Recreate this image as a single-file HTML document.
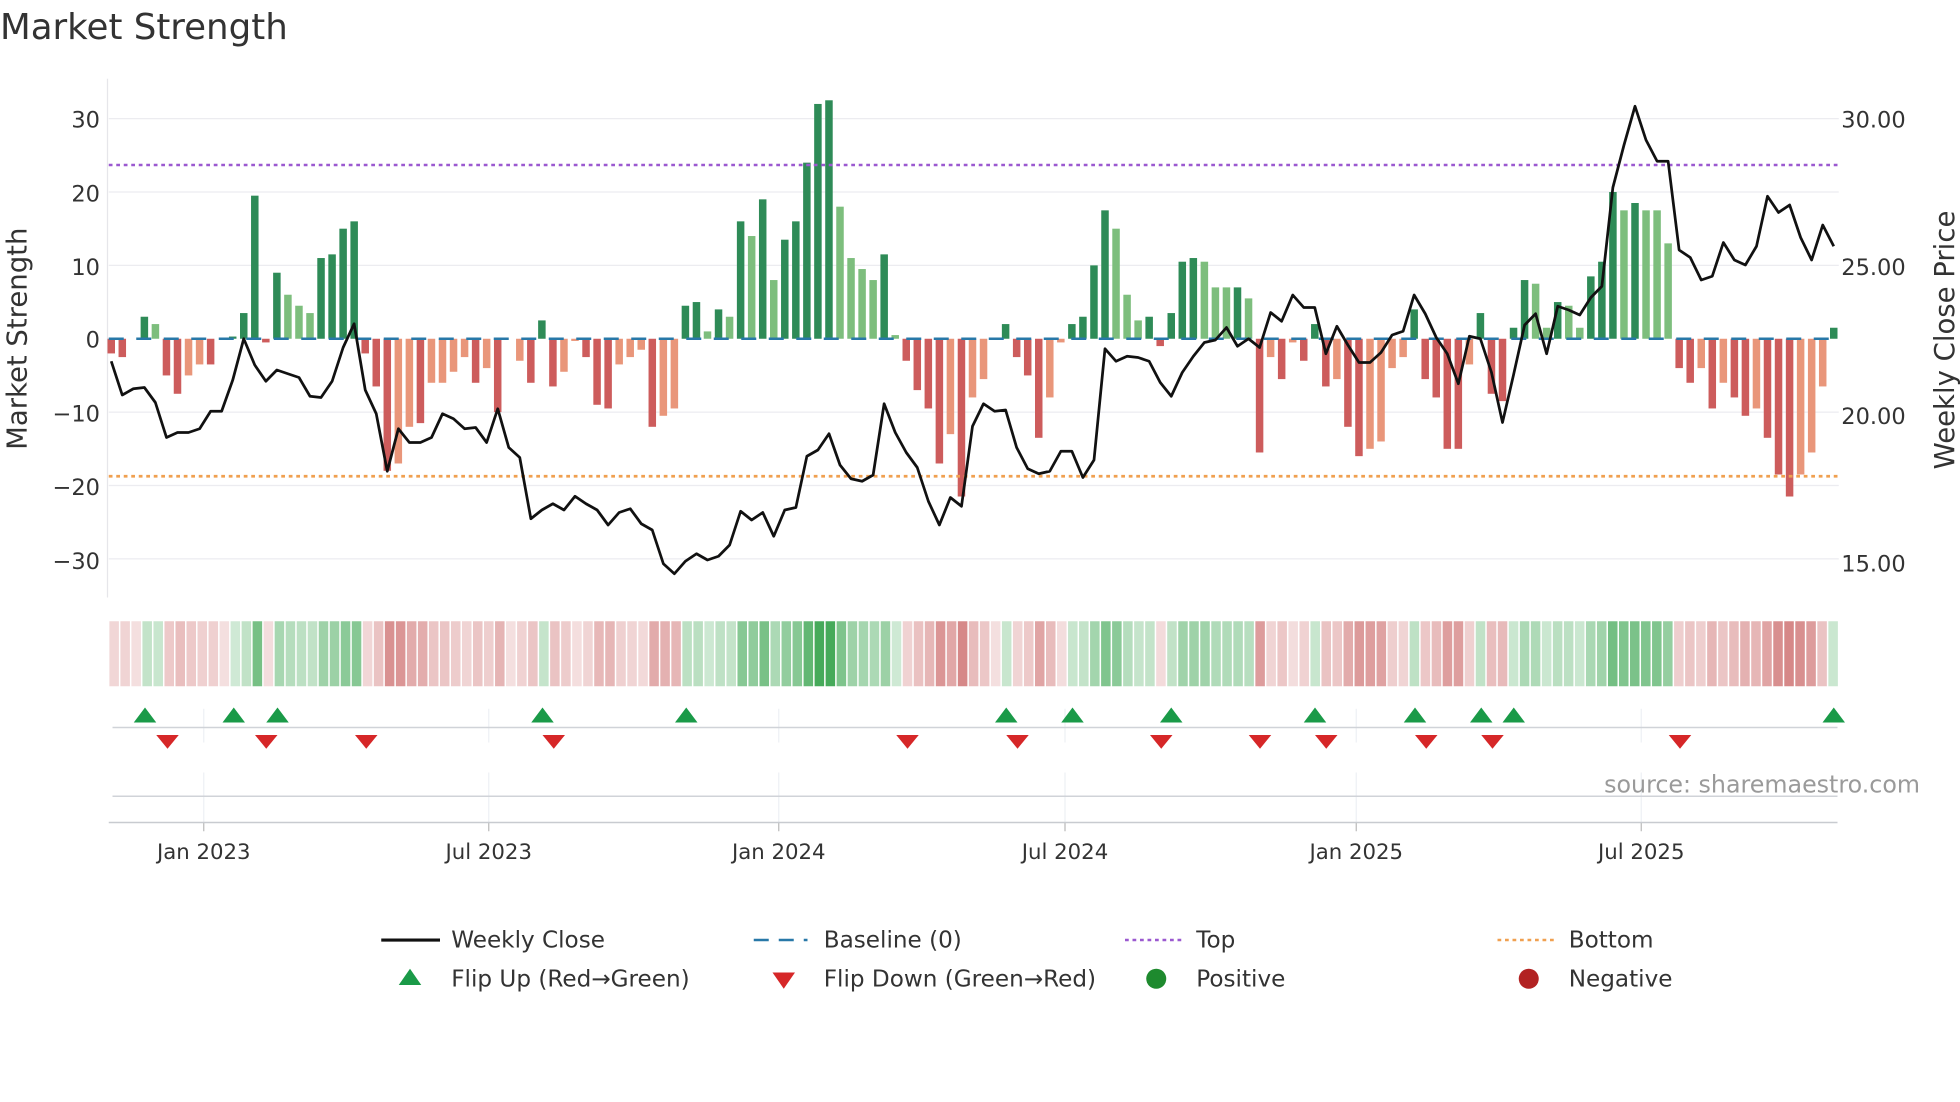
<!DOCTYPE html>
<html><head><meta charset="utf-8"><style>
html,body{margin:0;padding:0;background:#fff;width:1960px;height:1102px;overflow:hidden}
svg{display:block}
text{font-family:"DejaVu Sans","Liberation Sans",sans-serif;fill:#333}
</style></head><body>
<svg id="s" width="1960" height="1102" viewBox="0 0 1568 881.6" xmlns="http://www.w3.org/2000/svg">
<text x="0" y="31" font-size="28.5">Market Strength</text>
<g id="grid"></g>
<g id="heat"></g>
<g id="bars"></g>
<g id="lines"></g>
<g id="marks"></g>
<text x="1536" y="634" font-size="19" text-anchor="end" style="fill:#9a9a9a">source: sharemaestro.com</text>
<g font-size="18">
<text x="80" y="102" text-anchor="end">30</text>
<text x="80" y="161" text-anchor="end">20</text>
<text x="80" y="220" text-anchor="end">10</text>
<text x="80" y="278" text-anchor="end">0</text>
<text x="80" y="337" text-anchor="end">−10</text>
<text x="80" y="396" text-anchor="end">−20</text>
<text x="80" y="455" text-anchor="end">−30</text>
<text x="1473" y="102">30.00</text>
<text x="1473" y="220">25.00</text>
<text x="1473" y="339">20.00</text>
<text x="1473" y="457">15.00</text>
<text transform="translate(21,271) rotate(-90)" text-anchor="middle" font-size="22">Market Strength</text>
<text transform="translate(1563,272) rotate(-90)" text-anchor="middle" font-size="22">Weekly Close Price</text>
<text x="163" y="687" text-anchor="middle" font-size="17">Jan 2023</text>
<text x="391" y="687" text-anchor="middle" font-size="17">Jul 2023</text>
<text x="623" y="687" text-anchor="middle" font-size="17">Jan 2024</text>
<text x="852" y="687" text-anchor="middle" font-size="17">Jul 2024</text>
<text x="1085" y="687" text-anchor="middle" font-size="17">Jan 2025</text>
<text x="1313" y="687" text-anchor="middle" font-size="17">Jul 2025</text>
</g>
<g font-size="18.5">
<line x1="305" y1="752" x2="352" y2="752" stroke="#111" stroke-width="2.5"/>
<text x="361" y="758">Weekly Close</text>
<line x1="603" y1="752" x2="646" y2="752" stroke="#2878a8" stroke-width="2" stroke-dasharray="12,8"/>
<text x="659" y="758">Baseline (0)</text>
<line x1="900" y1="752" x2="945" y2="752" stroke="#9b59d0" stroke-width="2" stroke-dasharray="3,3"/>
<text x="957" y="758">Top</text>
<line x1="1198" y1="752" x2="1243" y2="752" stroke="#f0a050" stroke-width="2" stroke-dasharray="3,3"/>
<text x="1255" y="758">Bottom</text>
<polygon points="319,788 337,788 328,775" fill="#1a9a48"/>
<text x="361" y="789">Flip Up (Red→Green)</text>
<polygon points="618,778 636,778 627,791" fill="#d62728"/>
<text x="659" y="789">Flip Down (Green→Red)</text>
<circle cx="925" cy="783" r="8" fill="#1e8a2e"/>
<text x="957" y="789">Positive</text>
<circle cx="1223" cy="783" r="8" fill="#b22222"/>
<text x="1255" y="789">Negative</text>
</g>
</svg>
<script>
var NS="http://www.w3.org/2000/svg";
function el(p,t,a){var e=document.createElementNS(NS,t);for(var k in a)e.setAttribute(k,a[k]);document.getElementById(p).appendChild(e);return e;}
var B=[[-2,0],[-2.5,0],[0,0],[3,0],[2,1],[-5,0],[-7.5,0],[-5,1],[-3.5,1],[-3.5,0],[0,0],[0.3,0],[3.5,0],[19.5,0],[-0.5,0],[9,0],[6,1],[4.5,1],[3.5,1],[11,0],[11.5,0],[15,0],[16,0],[-2,0],[-6.5,0],[-18,0],[-17,1],[-12,1],[-11.5,0],[-6,1],[-6,1],[-4.5,1],[-2.5,1],[-6,0],[-4,1],[-10,0],[0,0],[-3,1],[-6,0],[2.5,0],[-6.5,0],[-4.5,1],[-0.3,1],[-2.5,0],[-9,0],[-9.5,0],[-3.5,1],[-2.5,1],[-1.5,1],[-12,0],[-10.5,1],[-9.5,1],[4.5,0],[5,0],[1,1],[4,0],[3,1],[16,0],[14,1],[19,0],[8,1],[13.5,0],[16,0],[24,0],[32,0],[32.5,0],[18,1],[11,1],[9.5,1],[8,1],[11.5,0],[0.5,1],[-3,0],[-7,0],[-9.5,0],[-17,0],[-13,1],[-21.5,0],[-8,1],[-5.5,1],[0,0],[2,0],[-2.5,0],[-5,0],[-13.5,0],[-8,1],[-0.5,1],[2,0],[3,0],[10,0],[17.5,0],[15,1],[6,1],[2.5,1],[3,0],[-1,0],[3.5,0],[10.5,0],[11,0],[10.5,1],[7,1],[7,1],[7,0],[5.5,1],[-15.5,0],[-2.5,1],[-5.5,0],[-0.5,1],[-3,0],[2,0],[-6.5,0],[-5.5,1],[-12,0],[-16,0],[-15,1],[-14,1],[-4,1],[-2.5,1],[4,0],[-5.5,0],[-8,0],[-15,0],[-15,0],[-3.5,1],[3.5,0],[-7.5,0],[-8.5,0],[1.5,0],[8,0],[7.5,1],[1.5,1],[5,0],[4.5,1],[1.5,1],[8.5,0],[10.5,0],[20,0],[17.5,1],[18.5,0],[17.5,1],[17.5,1],[13,1],[-4,0],[-6,0],[-4,1],[-9.5,0],[-6,1],[-8,0],[-10.5,0],[-9.5,1],[-13.5,0],[-18.5,0],[-21.5,0],[-18.5,1],[-15.5,1],[-6.5,1],[1.5,0]];
var L=[289,316,311,310,322,350,346,346,343,329,329,304,271,292,305,296,299,302,317,318,305,278,259,312,331,377,343,354,354,350,331,335,343,342,354,327,358,366,415,408,403,408,397,403,408,420,410,407,419,424,451,459,449,443,448,445,436,409,416,410,429,408,406,365,360,347,372,383,385,380,323,346,362,374,401,420,398,405,341,323,329,328,358,375,379,377,361,361,382,368,279,289,285,286,289,306,317,298,285,274,272,262,277,271,278,250,257,236,246,246,283,261,276,290,290,282,268,265,236,251,270,283,307,269,271,298,338,300,260,251,283,245,248,252,238,229,150,116,85,112,129,129,200,206,224,221,194,208,212,197,157,170,164,190,208,180,197];
var n=B.length,x0=89,x1=1467,dx=(x1-x0)/(n-1),Z=271,U=5.87;
[30,20,10,-10,-20,-30].forEach(function(v){var y=Z-v*U;el("grid","line",{x1:87,x2:1471,y1:y,y2:y,stroke:"#ececf0","stroke-width":1});});
el("grid","line",{x1:86,x2:86,y1:63,y2:478,stroke:"#e6e6ea"});
[163,391,623,852,1085,1313].forEach(function(x){el("grid","line",{x1:x,x2:x,y1:567,y2:594,stroke:"#eef0f4"});el("grid","line",{x1:x,x2:x,y1:618,y2:658,stroke:"#eef0f4"});el("grid","line",{x1:x,x2:x,y1:658,y2:665,stroke:"#bbb"});});
el("grid","line",{x1:90,x2:1470,y1:582,y2:582,stroke:"#d0d3d8","stroke-width":1.2});
el("grid","line",{x1:90,x2:1470,y1:637,y2:637,stroke:"#d0d3d8","stroke-width":1.2});
el("grid","line",{x1:87,x2:1470,y1:658,y2:658,stroke:"#c8cbd0","stroke-width":1.2});
var hw=(1471-87)/n;
for(var i=0;i<n;i++){var v=B[i][0],lt=B[i][1],x=x0+dx*i;
 var m=Math.min(Math.abs(v)/30,1),c;
 if(v>=0.2){var a=0.25+0.75*m;c="rgb("+Math.round(255-(255-70)*a)+","+Math.round(255-(255-170)*a)+","+Math.round(255-(255-90)*a)+")";}
 else{var a=0.22+0.6*Math.min(Math.abs(v)/20,1);c="rgb("+Math.round(255-(255-205)*a)+","+Math.round(255-(255-110)*a)+","+Math.round(255-(255-110)*a)+")";}
 el("heat","rect",{x:87+hw*i+0.5,y:497,width:hw-1.2,height:52,fill:c});
 if(Math.abs(v)>0.05){var col=v>0?(lt?"#7dbe7d":"#2e8b57"):(lt?"#e9967a":"#cd5c5c");
  var h=Math.abs(v)*U;el("bars","rect",{x:x-3,y:v>0?Z-h:Z,width:6,height:h,fill:col});}
}
el("lines","line",{x1:87,x2:1471,y1:Z,y2:Z,stroke:"#2878a8","stroke-width":2,"stroke-dasharray":"12,10"});
el("lines","line",{x1:87,x2:1471,y1:132,y2:132,stroke:"#9b59d0","stroke-width":2,"stroke-dasharray":"3,3"});
el("lines","line",{x1:87,x2:1471,y1:381,y2:381,stroke:"#f0a050","stroke-width":2.2,"stroke-dasharray":"3,3"});
var pts=L.map(function(y,i){return (x0+(x1-x0)/(L.length-1)*i).toFixed(1)+","+y;}).join(" ");
el("lines","polyline",{points:pts,fill:"none",stroke:"#111","stroke-width":2.2,"stroke-linejoin":"round"});
[116,187,222,434,549,805,858,937,1052,1132,1185,1211,1467].forEach(function(x){el("marks","polygon",{points:(x-9)+",578 "+(x+9)+",578 "+x+",566",fill:"#1a9a48"});});
[134,213,293,443,726,814,929,1008,1061,1141,1194,1344].forEach(function(x){el("marks","polygon",{points:(x-9)+",588 "+(x+9)+",588 "+x+",599",fill:"#d62728"});});
</script>
</body></html>
